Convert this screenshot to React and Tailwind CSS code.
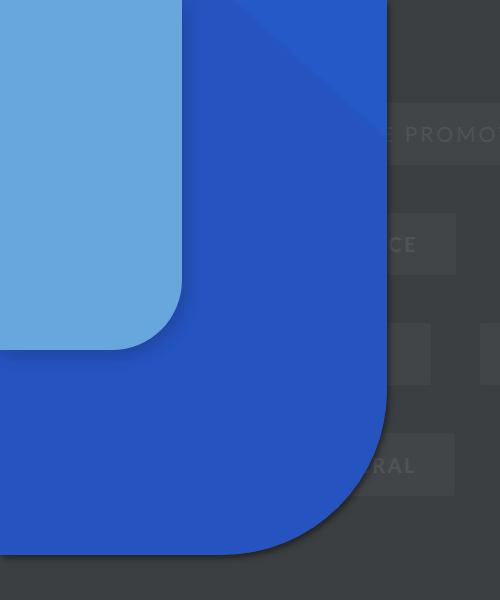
export default function App() {
  const tag = "h-[62px] shrink-0 rounded-[3px] bg-[#424548] flex items-center whitespace-nowrap";
  const label = "text-[20px] font-bold tracking-[2.5px] text-[#505356]";
  return (
    <div className="relative w-[500px] h-[600px] overflow-hidden bg-[#3c3f41] font-['Lato',sans-serif]">
      <div className="flex flex-col gap-[48px] pt-[103px]">
        <div className="flex pl-[300px]">
          <div className={`${tag} w-[400px] pl-[35px] text-[21px] font-normal tracking-[3px] text-[#4f5255]`}>FREE PROMOTION</div>
        </div>
        <div className="flex pl-[300px]">
          <div className={`${tag} ${label} w-[156px] justify-end pr-[38px]`}>SERVICE</div>
        </div>
        <div className="flex pl-[300px] gap-[49px]">
          <div className={`${tag} w-[131px]`}></div>
          <div className={`${tag} w-[120px]`}></div>
        </div>
        <div className="flex pl-[300px]">
          <div className={`${tag} ${label} w-[155px] h-[63px] justify-end pr-[38px]`}>GENERAL</div>
        </div>
      </div>
      <div className="absolute left-0 top-0 w-[387px] h-[555px] rounded-br-[165px] bg-[linear-gradient(42deg,#2553bf_84.3%,#2559c8_85.1%)] shadow-[2px_3px_6px_rgba(0,0,0,0.5)]">
        <div className="w-[182px] h-[350px] rounded-br-[70px] bg-[#68a7dd] shadow-[2px_4px_18px_rgba(0,0,0,0.2)]"></div>
      </div>
    </div>
  );
}
